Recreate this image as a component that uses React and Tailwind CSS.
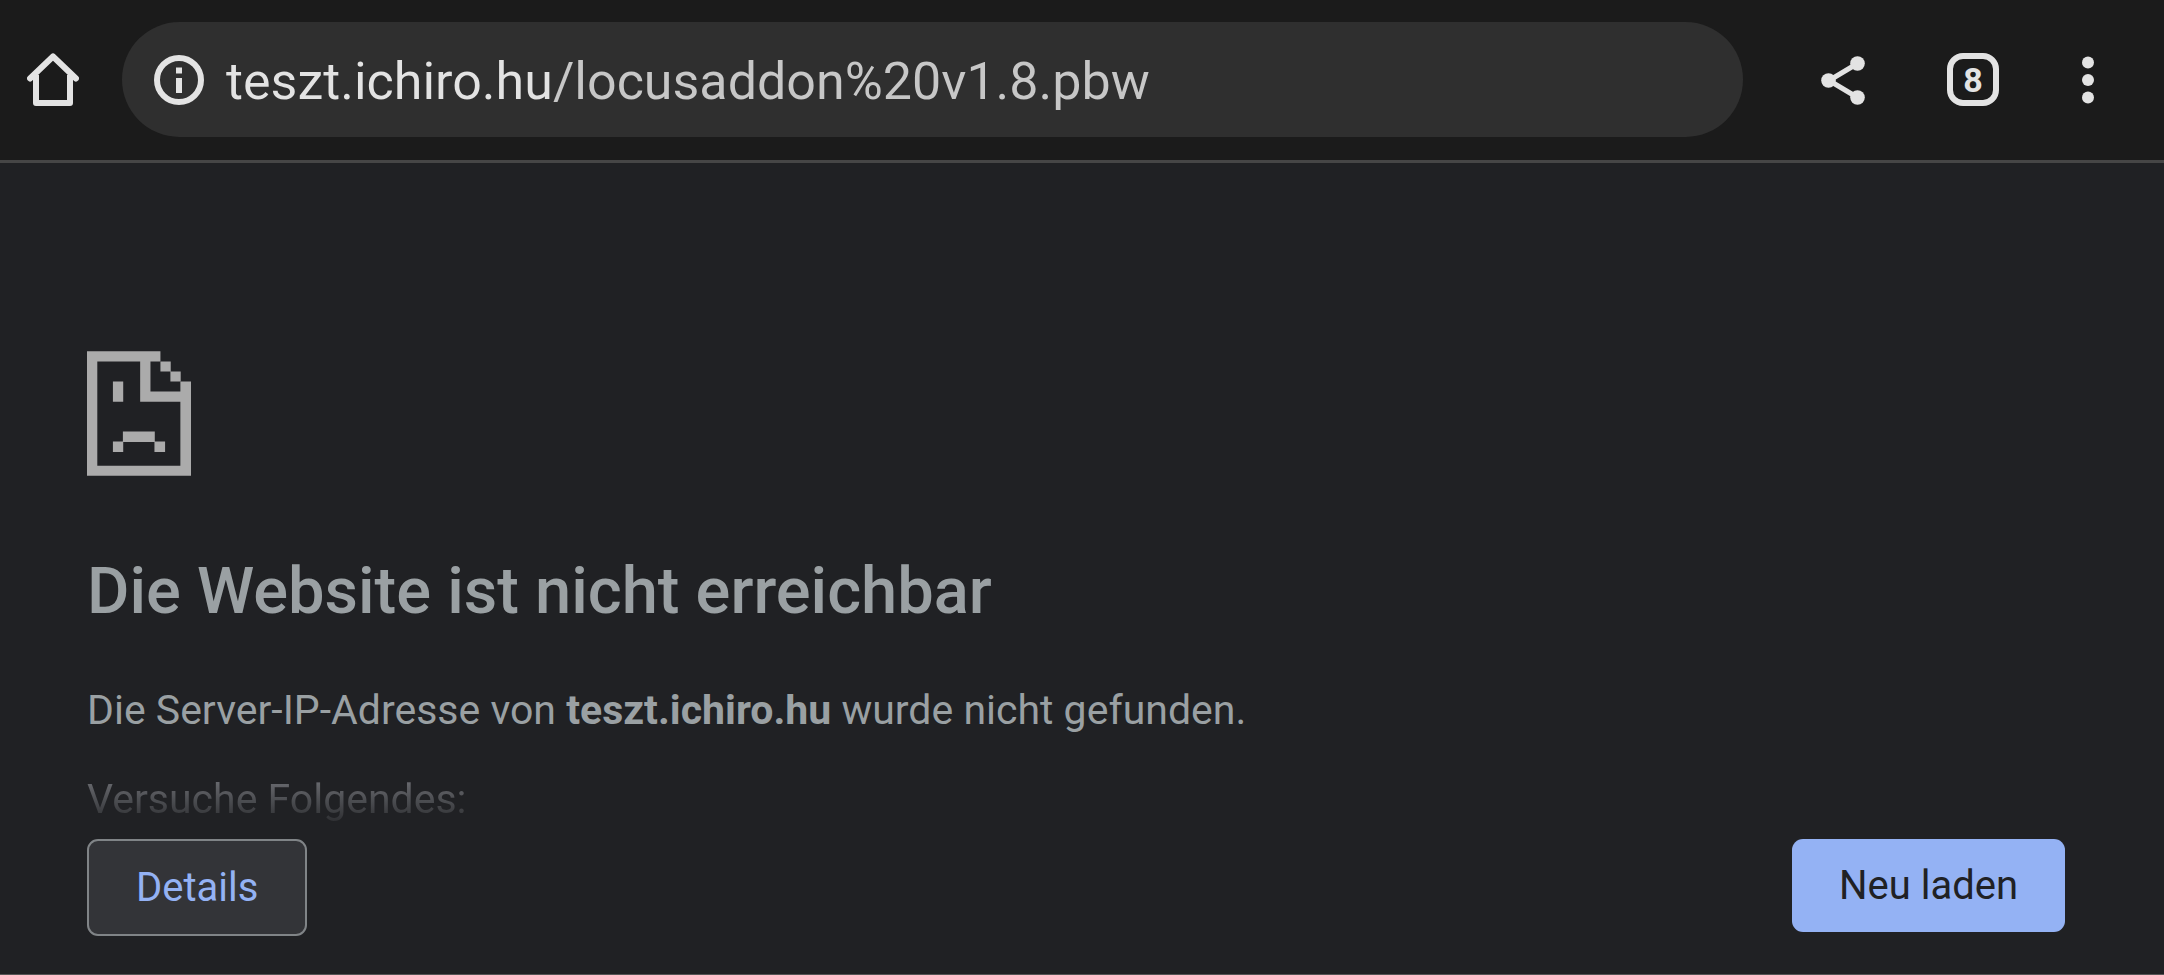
function HomeIcon() {
  return (
    <svg viewBox="0 0 52 54" className="h-[54px] w-[52px]" fill="none" stroke="currentColor" strokeWidth="6" strokeLinecap="round" strokeLinejoin="round" aria-hidden="true">
      <path d="M3 25.500 26 3.500l23 22" />
      <path d="M9 22v28h34V22" strokeLinecap="butt" />
    </svg>
  );
}

function InfoIcon() {
  return (
    <svg viewBox="0 0 50 50" className="h-[50px] w-[50px]" fill="none" aria-hidden="true">
      <circle cx="25" cy="25" r="22" stroke="currentColor" strokeWidth="6" />
      <path d="M22 12.500h6v6h-6zM22 23h6v15h-6z" fill="currentColor" />
    </svg>
  );
}

function ShareIcon() {
  return (
    <svg viewBox="0 0 44 50" className="h-[50px] w-[44px]" fill="currentColor" aria-hidden="true">
      <path d="M36.500 8.500 8 25.500l28.500 17" fill="none" stroke="currentColor" strokeWidth="5" />
      <circle cx="36.500" cy="8.500" r="7.300" />
      <circle cx="7.500" cy="25.500" r="7.300" />
      <circle cx="36.500" cy="42.500" r="7.300" />
    </svg>
  );
}

function MenuIcon() {
  return (
    <svg viewBox="0 0 12 48" className="h-[48px] w-[12px]" fill="currentColor" aria-hidden="true">
      <circle cx="6" cy="6.500" r="6" />
      <circle cx="6" cy="24" r="6" />
      <circle cx="6" cy="41.500" r="6" />
    </svg>
  );
}

function SadPageIcon() {
  return (
    <svg viewBox="0 0 313 375" className="h-[125px] w-[104px]" fill="#ababab" aria-hidden="true">
      <path fillRule="evenodd" d="M0 0H221V31H191V121H281V91H313V375H0ZM31 31V345H281V152H160V31Z" />
      <path d="M221 31h31v30h-31zM251 61h31v30h-31zM78 91h31v61H78zM108 242h96v31h-96zM78 272h31v31H78zM203 272h32v31h-32z" />
    </svg>
  );
}

export default function App() {
  return (
    <div className="flex min-h-screen flex-col border-b border-[#555555] bg-[#202124] font-[Roboto,sans-serif]">
      <header className="flex items-center border-b-3 border-[#464646] bg-[#1b1b1b] pt-[22px] pr-[70px] pb-[23px] pl-[27px] text-[#e3e3e3]">
        <button type="button" aria-label="Startseite" className="mr-[43px]">
          <HomeIcon />
        </button>
        <div className="flex h-[115px] min-w-0 flex-1 items-center gap-[22px] rounded-full bg-[#2f2f2f] px-8">
          <button type="button" aria-label="Websiteinformationen">
            <InfoIcon />
          </button>
          <input
            type="text"
            aria-label="Adresse"
            defaultValue="teszt.ichiro.hu/locusaddon%20v1.8.pbw"
            className="min-w-0 flex-1 bg-[linear-gradient(to_right,#e3e3e3_326px,#c7c7c7_326px)] bg-clip-text pt-1 text-[52px] leading-[72px] text-transparent outline-none"
          />
        </div>
        <button type="button" aria-label="Teilen" className="ml-[78px]">
          <ShareIcon />
        </button>
        <button type="button" aria-label="Tabs" className="ml-[82px] flex h-[53px] w-[52px] items-center justify-center rounded-2xl border-6 border-current text-[34px] leading-none font-bold">
          8
        </button>
        <button type="button" aria-label="Menü" className="ml-[83px]">
          <MenuIcon />
        </button>
      </header>

      <main className="flex flex-1 flex-col pt-[188px] pr-[99px] pb-[38px] pl-[87px] text-[41px] leading-[62px] text-[#9aa0a3]">
        <SadPageIcon />
        <h1 className="mt-[75px] text-[65px] leading-[80px] font-medium">Die Website ist nicht erreichbar</h1>
        <p className="mt-[48px]">
          Die Server-IP-Adresse von <strong className="font-bold">teszt.ichiro.hu</strong> wurde nicht gefunden.
        </p>
        <p className="mt-[27px] bg-linear-to-b from-[#7c7e83] to-[#242528] bg-clip-text text-transparent">Versuche Folgendes:</p>
        <div className="mt-auto flex items-start justify-between text-[40px]">
          <button type="button" className="h-[97px] rounded-[11px] border-2 border-[#808487] bg-[#333438] px-[47px] text-[#94b2f4]">
            Details
          </button>
          <button type="button" className="h-[93px] rounded-[11px] bg-[#94b2f4] px-[47px] text-[#202124]">
            Neu laden
          </button>
        </div>
      </main>
    </div>
  );
}
